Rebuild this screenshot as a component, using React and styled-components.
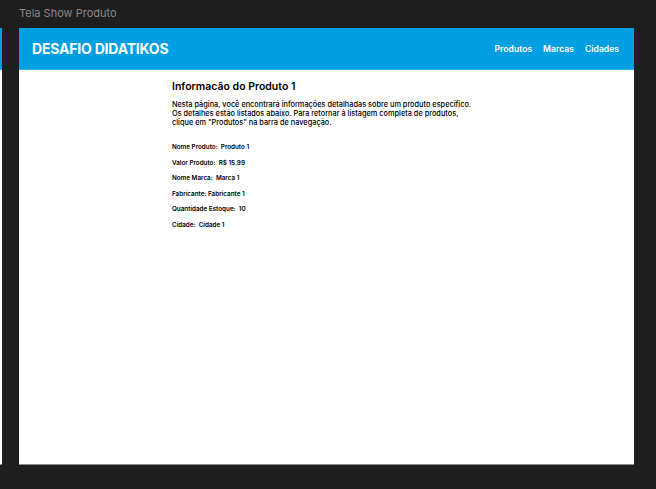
import React from "react";
import styled, { createGlobalStyle } from "styled-components";

const GlobalStyle = createGlobalStyle`
  body {
    margin: 0;
    background: #1e1e1e;
    font-family: Inter, "Noto Sans", sans-serif;
  }
`;

const Canvas = styled.div`
  width: 656px;
  height: 489px;
  overflow: hidden;
  display: flex;
  flex-direction: column;
`;

const FrameLabel = styled.div`
  height: 28px;
  padding-left: 19px;
  box-sizing: border-box;
  padding-top: 6px;
  font-size: 11px;
  line-height: 14px;
  color: #8a8a8a;
`;

const FramesRow = styled.div`
  display: flex;
  gap: 17px;
`;

const Frame = styled.div`
  width: ${(p) => p.width}px;
  height: 437px;
  background: #fff;
  border-bottom: 1px solid #8a8a8a;
  box-sizing: border-box;
  display: flex;
  flex-direction: column;
  overflow: hidden;
`;

const Navbar = styled.header`
  height: 42px;
  flex-shrink: 0;
  background: #009fe1;
  border-bottom: 1px solid #31b4ec;
  box-sizing: border-box;
  display: flex;
  align-items: center;
  justify-content: space-between;
  padding: 0 15px 0 13px;
`;

const Brand = styled.h1`
  margin: 0;
  font-size: 14px;
  font-weight: 700;
  color: #fff;
  letter-spacing: -0.2px;
`;

const Nav = styled.nav`
  display: flex;
  gap: 11px;
`;

const NavLink = styled.a`
  font-size: 8.6px;
  font-weight: 600;
  color: #fff;
  text-decoration: none;
`;

const Content = styled.main`
  padding: 10px 0 0 153px;
  width: 330px;
`;

const Title = styled.h2`
  margin: 0;
  font-size: 10.5px;
  line-height: 14px;
  font-weight: 600;
  color: #000;
`;

const Intro = styled.p`
  margin: 6px 0 0;
  font-size: 7.35px;
  line-height: 9px;
  font-weight: 500;
  color: #000;
`;

const Fields = styled.div`
  margin-top: 16px;
  display: flex;
  flex-direction: column;
  gap: 7.5px;
`;

const Field = styled.div`
  font-size: 6.3px;
  line-height: 8px;
  font-weight: 600;
  color: #000;
  white-space: pre;
`;

const fields = [
  ["Nome Produto:", "Produto 1"],
  ["Valor Produto:", "R$ 15.99"],
  ["Nome Marca:", "Marca 1"],
  ["Fabricante:", "Fabricante 1"],
  ["Quantidade Estoque:", "10"],
  ["Cidade:", "Cidade 1"],
];

export default function App() {
  return (
    <Canvas>
      <GlobalStyle />
      <FrameLabel>Tela Show Produto</FrameLabel>
      <FramesRow>
        <Frame width={2}>
          <Navbar />
        </Frame>
        <Frame width={615}>
          <Navbar>
            <Brand>DESAFIO DIDATIKOS</Brand>
            <Nav>
              <NavLink href="#">Produtos</NavLink>
              <NavLink href="#">Marcas</NavLink>
              <NavLink href="#">Cidades</NavLink>
            </Nav>
          </Navbar>
          <Content>
            <Title>Informacão do Produto 1</Title>
            <Intro>
              Nesta página, você encontrará informações detalhadas sobre um produto específico.
              <br />
              Os detalhes estão listados abaixo. Para retornar à listagem completa de produtos,
              <br />
              clique em "Produtos" na barra de navegação.
            </Intro>
            <Fields>
              {fields.map(([label, value]) => (
                <Field key={label}>
                  {label}
                  {label === "Fabricante:" ? " " : "  "}
                  {value}
                </Field>
              ))}
            </Fields>
          </Content>
        </Frame>
      </FramesRow>
    </Canvas>
  );
}
